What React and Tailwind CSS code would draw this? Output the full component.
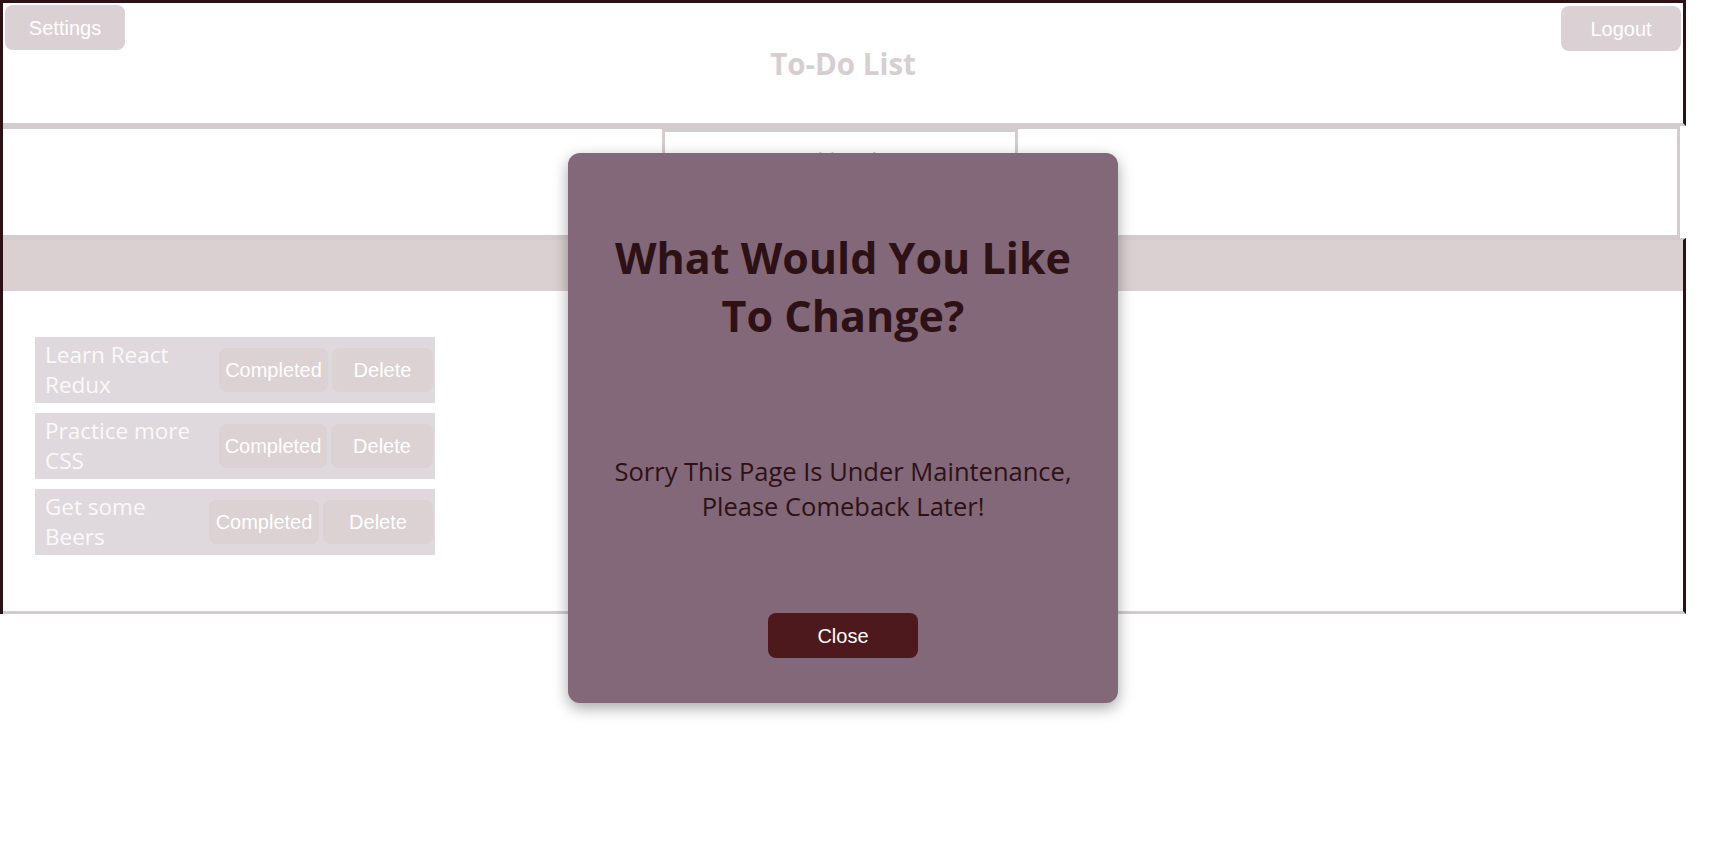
import React from 'react'

const sans = "font-['Open_Sans',sans-serif]"
const arial = "font-['Liberation_Sans',Arial,sans-serif]"

const todos = [
  { lines: ['Learn React', 'Redux'], done: 'w-[109px]', del: 'w-[101px]' },
  { lines: ['Practice more', 'CSS'], done: 'w-[108px]', del: 'w-[102px]' },
  { lines: ['Get some', 'Beers'], done: 'w-[110px]', del: 'w-[110px]' },
]

const TodoItem = ({ item }) => (
  <li className="flex items-center h-[66px] bg-[#dfd8dc] pl-[10px] pr-[2px]">
    <p className={`${sans} flex-1 text-[22.5px] leading-[30px] text-[#fbf8f9]`}>
      {item.lines.map((line) => (
        <span key={line} className="block">{line}</span>
      ))}
    </p>
    <div className="flex gap-[4px]">
      <button className={`${arial} ${item.done} h-[44px] rounded-[8px] bg-[#dcd1d3] text-[20px] text-white`}>
        Completed
      </button>
      <button className={`${arial} ${item.del} h-[44px] rounded-[8px] bg-[#dcd1d3] text-[20px] text-white`}>
        Delete
      </button>
    </div>
  </li>
)

const MaintenanceModal = () => (
  <div className="absolute top-0 left-0 w-[1686px] flex justify-center pt-[153px]">
    <div className="w-[550px] h-[550px] p-[25px] flex flex-col items-center rounded-[12px] bg-[#826879] shadow-[0_5px_15px_rgba(0,0,0,0.35)]">
      <h1 className={`${sans} mt-[51px] text-[43px] leading-[58px] font-bold text-center text-[#2e1115]`}>
        What Would You Like
        <br />
        To Change?
      </h1>
      <p className={`${sans} mt-[109px] text-[25.5px] leading-[35px] text-center text-[#2e1115]`}>
        Sorry This Page Is Under Maintenance,
        <br />
        Please Comeback Later!
      </p>
      <button className={`${arial} mt-[89px] w-[150px] h-[45px] rounded-[8px] bg-[#4d191d] text-[20px] text-white`}>
        Close
      </button>
    </div>
  </div>
)

export default function App() {
  return (
    <div className="min-h-screen bg-white">
      <div className="relative w-[1686px]">
        <div className="border-l-[3px] border-[#2e1015]">
          {/* Header */}
          <header className="grid grid-cols-[120px_1fr_120px] h-[126px] px-[2px] border-t-[3px] border-r-[3px] border-b-[3px] border-t-[#2e1015] border-r-[#2e1015] border-b-[#d3cccd]">
            <div>
              <button className={`${arial} mt-[2px] w-[120px] h-[45px] rounded-[8px] bg-[#dbd0d3] text-[20px] text-white`}>
                Settings
              </button>
            </div>
            <h1 className={`${sans} pt-[41px] text-center text-[29.5px] leading-[40px] font-bold text-[#d8ced0]`}>
              To-Do List
            </h1>
            <div>
              <button className={`${arial} mt-[3px] w-[120px] h-[45px] rounded-[8px] bg-[#dbd0d3] text-[20px] text-white`}>
                Logout
              </button>
            </div>
          </header>

          {/* Add task form */}
          <form className="flex justify-center w-[1677px] h-[112px] border-t-[3px] border-r-[3px] border-b-[3px] border-[#d3cccd]">
            <input
              type="text"
              placeholder="Add Task"
              className={`${sans} w-[356px] h-[60px] border-[3px] border-[#d3cccd] text-center text-[20px] placeholder:text-[#c9c0c2] outline-none`}
            />
          </form>

          {/* Filter bar */}
          <div className="h-[53px] bg-[#dad0d2] border-t-[2px] border-t-[#d3cccd] border-r-[3px] border-r-[#2e1015]" />

          {/* Todo list */}
          <div className="h-[323px] pt-[46px] pl-[32px] border-r-[3px] border-b-[3px] border-r-[#2e1015] border-b-[#d3cccd]">
            <ul className="flex flex-col gap-[10px] w-[400px]">
              {todos.map((item) => (
                <TodoItem key={item.lines[0]} item={item} />
              ))}
            </ul>
          </div>
        </div>

        <MaintenanceModal />
      </div>
    </div>
  )
}
